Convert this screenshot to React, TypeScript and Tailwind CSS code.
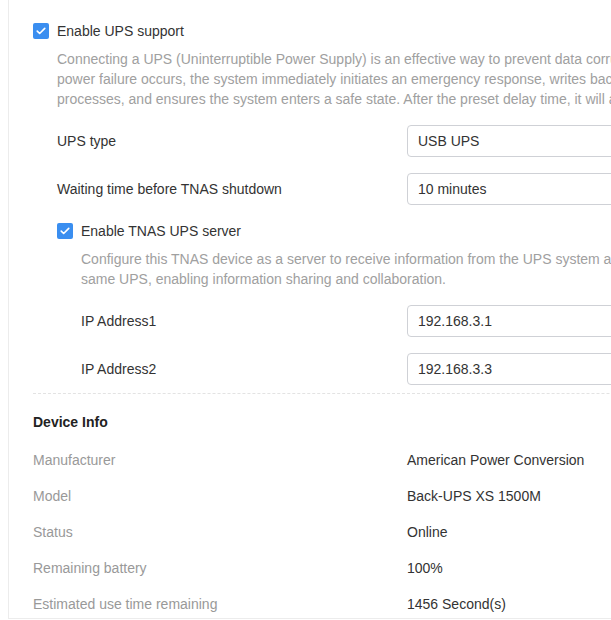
import type { ReactNode } from 'react';

const FONT = { fontFamily: '"Liberation Sans", Arial, sans-serif' };

function Check({ label }: { label: string }) {
  return (
    <label className="flex h-5 items-center gap-2 text-sm text-[#333]">
      <span className="flex h-4 w-4 shrink-0 items-center justify-center rounded-[2px] bg-[#3a8ef0]">
        <svg viewBox="0 0 16 16" className="h-3 w-3" fill="none">
          <path d="M3 8.2l3.2 3.1L13 4.6" stroke="#fff" strokeWidth="2.2" strokeLinecap="round" strokeLinejoin="round" />
        </svg>
      </span>
      {label}
    </label>
  );
}

function FieldRow({ label, value, labelW }: { label: string; value: string; labelW: string }) {
  return (
    <div className="mt-4 flex items-center">
      <span className={`${labelW} shrink-0 text-sm text-[#333]`}>{label}</span>
      <div className="flex h-8 w-[300px] shrink-0 items-center rounded border border-[#cfd1d6] px-[10px] text-sm text-[#333]">
        {value}
      </div>
    </div>
  );
}

function Desc({ children }: { children: ReactNode }) {
  return <p className="mt-2 whitespace-nowrap text-sm leading-5 text-[#a0a0a0]">{children}</p>;
}

const deviceInfo = [
  ['Manufacturer', 'American Power Conversion'],
  ['Model', 'Back-UPS XS 1500M'],
  ['Status', 'Online'],
  ['Remaining battery', '100%'],
  ['Estimated use time remaining', '1456 Second(s)'],
];

export default function App() {
  return (
    <div className="h-[620px] w-[611px] overflow-hidden bg-white pl-2" style={FONT}>
      <div className="h-[619px] w-[800px] overflow-hidden border-b border-l border-[#ececec] px-6 pt-[21px]">
        <Check label="Enable UPS support" />
        <div className="pl-6">
          <Desc>
            Connecting a UPS (Uninterruptible Power Supply) is an effective way to prevent data corruption. When a
            <br />
            power failure occurs, the system immediately initiates an emergency response, writes back cached data, stops
            <br />
            processes, and ensures the system enters a safe state. After the preset delay time, it will automatically shut down.
          </Desc>
          <FieldRow label="UPS type" value="USB UPS" labelW="w-[350px]" />
          <FieldRow label="Waiting time before TNAS shutdown" value="10 minutes" labelW="w-[350px]" />
          <div className="mt-4">
            <Check label="Enable TNAS UPS server" />
          </div>
          <div className="pl-6">
            <Desc>
              Configure this TNAS device as a server to receive information from the UPS system and share it with other devices connected to the
              <br />
              same UPS, enabling information sharing and collaboration.
            </Desc>
            <FieldRow label="IP Address1" value="192.168.3.1" labelW="w-[326px]" />
            <FieldRow label="IP Address2" value="192.168.3.3" labelW="w-[326px]" />
          </div>
        </div>
        <div className="mt-2 border-t border-dashed border-[#e3e3e3]" />
        <h3 className="mt-[18px] text-sm font-bold leading-5 text-[#222]">Device Info</h3>
        <div className="mt-[10px] flex flex-col">
          {deviceInfo.map(([k, v]) => (
            <div key={k} className="flex h-9 items-center text-sm">
              <span className="w-[374px] shrink-0 text-[#999]">{k}</span>
              <span className="text-[#333]">{v}</span>
            </div>
          ))}
        </div>
      </div>
    </div>
  );
}
